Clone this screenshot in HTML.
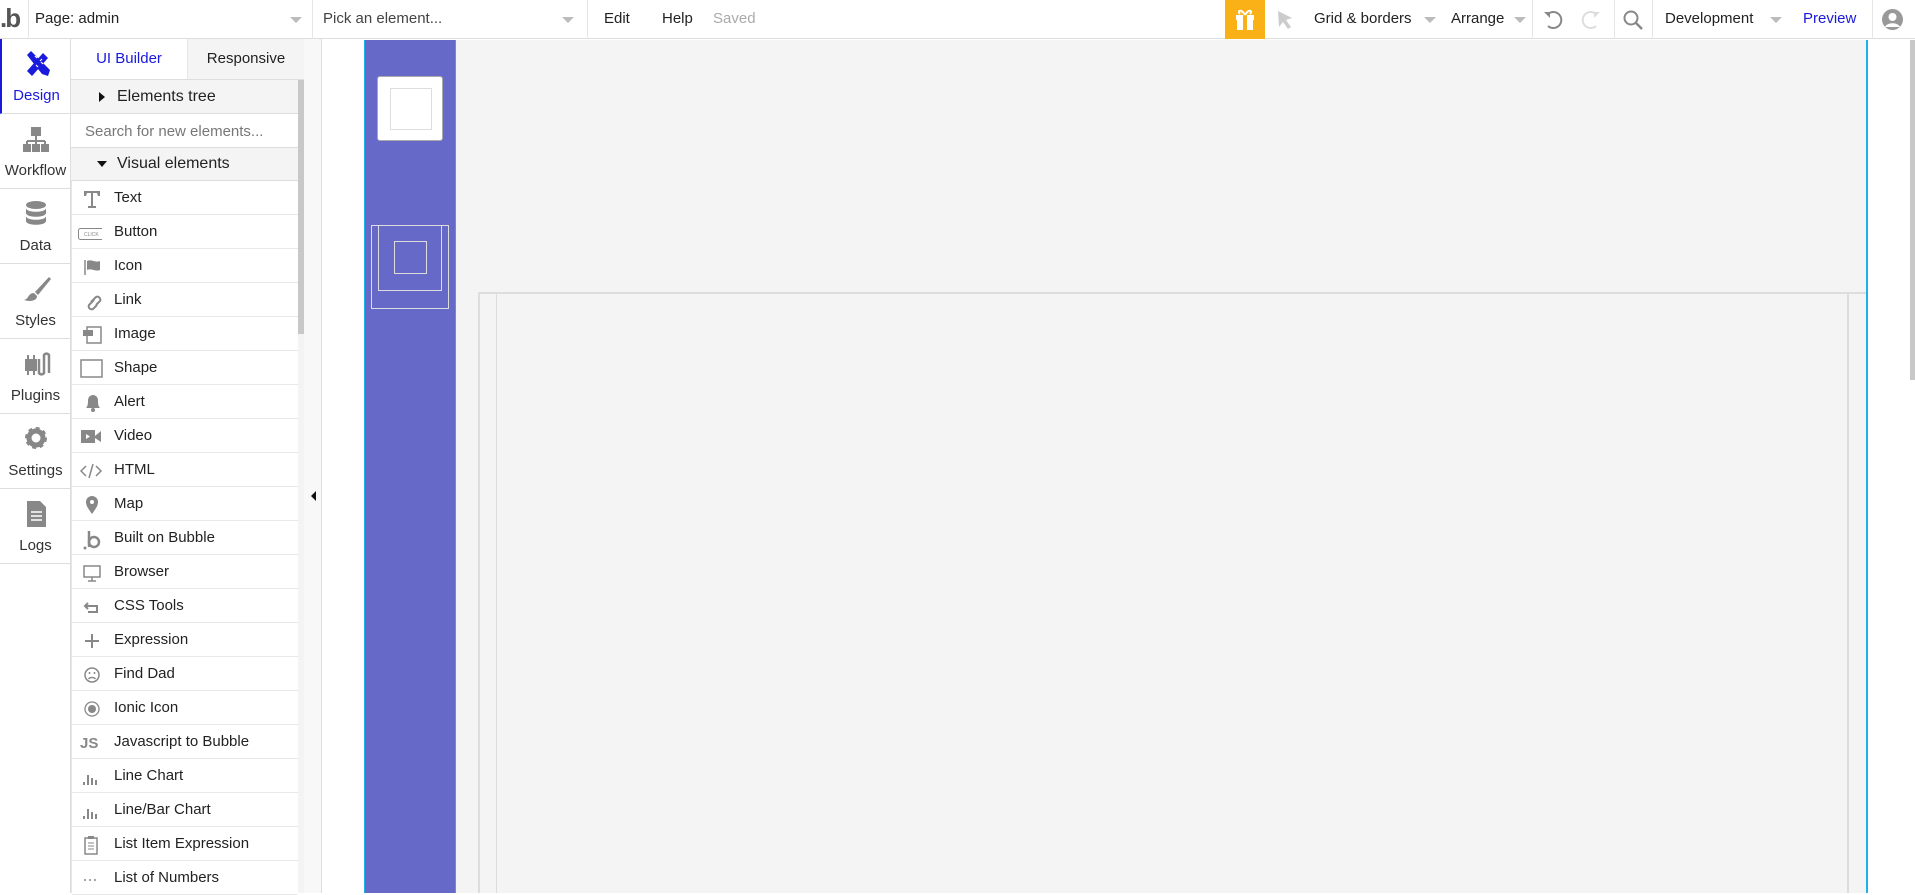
<!DOCTYPE html>
<html><head><meta charset="utf-8"><style>
*{box-sizing:border-box;margin:0;padding:0}
body{width:1915px;height:893px;overflow:hidden;background:#fff;font-family:"Liberation Sans",sans-serif;font-size:15px;color:#222;position:relative}
.a{position:absolute}
.top{left:0;top:0;width:1915px;height:39px;border-bottom:1px solid #ddd;background:#fff}
.t{position:absolute;top:10px;white-space:nowrap}
.dd{position:absolute;top:17px;width:0;height:0;border-left:6px solid transparent;border-right:6px solid transparent;border-top:6px solid #bbb}
.vd{position:absolute;top:0;width:1px;height:39px;background:#e6e6e6}
.side{left:0;top:39px;width:71px;height:854px;border-right:1px solid #ddd;background:#fff}
.si{position:absolute;left:0;width:71px;height:75px;border-bottom:1px solid #ddd;text-align:center;color:#333}
.si span{position:absolute;left:0;right:0;top:48px;font-size:15px}
.si svg{position:absolute;left:22px;top:10px}
.panel{left:71px;top:39px;width:233px;height:854px;background:#fff}
.row{position:absolute;left:1px;width:226px;height:34px;border-bottom:1px solid #e8e8e8}
.row span{position:absolute;left:42px;top:8px}
.row svg{position:absolute;left:10px;top:8px}
</style></head><body>
<div class="a top">
 <div class="t" style="left:0;top:3px;font-size:26px;color:#555;font-weight:bold;letter-spacing:-2px">.b</div>
 <div class="vd" style="left:28px"></div>
 <div class="t" style="left:35px">Page: admin</div><div class="dd" style="left:290px"></div>
 <div class="vd" style="left:312px"></div>
 <div class="t" style="left:323px;color:#444">Pick an element...</div><div class="dd" style="left:562px"></div>
 <div class="vd" style="left:587px"></div>
 <div class="t" style="left:604px">Edit</div>
 <div class="t" style="left:662px">Help</div>
 <div class="t" style="left:713px;color:#aaa">Saved</div>
 <div class="a" style="left:1225px;top:0;width:40px;height:39px;background:#f9b117"></div>
 <svg class="a" style="left:1233px;top:6px" width="24" height="26" viewBox="0 0 24 26"><path d="M3 9h18v5H3zM4 14h16v10H4z" fill="#fff"/><rect x="10" y="9" width="4" height="15" fill="#f9b117"/><path d="M12 9C8 2 4 5 7 8M12 9c4-7 8-4 5-1" stroke="#fff" stroke-width="2" fill="none"/></svg>
 <svg class="a" style="left:1276px;top:10px" width="18" height="20"><path d="M2 1l14 7-6 2 5 7-3 2-5-7-4 5z" fill="#ccc"/></svg>
 <div class="t" style="left:1314px">Grid &amp; borders</div><div class="dd" style="left:1424px"></div>
 <div class="t" style="left:1451px">Arrange</div><div class="dd" style="left:1514px"></div>
 <div class="vd" style="left:1532px"></div>
 <svg class="a" style="left:1542px;top:9px" width="22" height="22"><path d="M6 5a8 8 0 1 1 0 12" stroke="#888" stroke-width="2" fill="none"/><path d="M2 3l6 0 0 6z" fill="#888"/></svg>
 <svg class="a" style="left:1580px;top:9px" width="22" height="22"><path d="M16 5a8 8 0 1 0 0 12" stroke="#ddd" stroke-width="2" fill="none"/><path d="M20 3l-6 0 0 6z" fill="#ddd"/></svg>
 <div class="vd" style="left:1614px"></div>
 <svg class="a" style="left:1622px;top:9px" width="22" height="22"><circle cx="9" cy="9" r="6.5" stroke="#888" stroke-width="2" fill="none"/><path d="M14 14l6 6" stroke="#888" stroke-width="2.5"/></svg>
 <div class="vd" style="left:1652px"></div>
 <div class="t" style="left:1665px">Development</div><div class="dd" style="left:1770px"></div>
 <div class="t" style="left:1803px;color:#1a1adc">Preview</div>
 <div class="vd" style="left:1872px"></div>
 <svg class="a" style="left:1881px;top:8px" width="23" height="23"><circle cx="11.5" cy="11.5" r="10.5" fill="#999"/><circle cx="11.5" cy="9" r="4" fill="#fff"/><path d="M4 19c2-5 13-5 15 0" fill="#fff"/></svg>
</div>

<div class="a side">
 <div class="si" style="top:0;border-left:2px solid #1a1adc"><svg width="28" height="30" viewBox="0 0 28 30"><path d="M3 6l4-4 19 19-2 6-6-2z" fill="#1a1adc"/><path d="M3 22L19 4l5 5L8 27z" fill="#1a1adc"/><path d="M11 7l2 2M17 13l2 2M14 18l-2-2M18 10l-2 2" stroke="#fff" stroke-width="1.2"/></svg><span style="color:#1a1adc">Design</span></div>
 <div class="si" style="top:75px"><svg width="28" height="30"><rect x="9" y="3" width="10" height="9" fill="#888"/><path d="M14 12v5M5 17h18M5 17v4M14 17v4M23 17v4" stroke="#888" stroke-width="2"/><rect x="1" y="20" width="8" height="8" fill="#888"/><rect x="10" y="20" width="8" height="8" fill="#888"/><rect x="19" y="20" width="8" height="8" fill="#888"/></svg><span>Workflow</span></div>
 <div class="si" style="top:150px"><svg width="28" height="30"><ellipse cx="14" cy="6" rx="10" ry="4" fill="#888"/><path d="M4 9c0 5 20 5 20 0v5c0 5-20 5-20 0zM4 17c0 5 20 5 20 0v5c0 5-20 5-20 0z" fill="#888"/></svg><span>Data</span></div>
 <div class="si" style="top:225px"><svg width="30" height="30"><path d="M27 3L13 18l3 3L29 5z" fill="#888"/><path d="M12 19c-6 0-5 6-10 7 6 2 13 1 13-4z" fill="#888"/></svg><span>Styles</span></div>
 <div class="si" style="top:300px"><svg width="30" height="30"><path d="M3 10h12v12H3z" fill="#888"/><path d="M6 6v5M12 6v5M6 22v4M12 22v4" stroke="#888" stroke-width="2"/><path d="M17 10v14a3 3 0 0 0 5 0V6a3 3 0 0 1 5 0v18" stroke="#888" stroke-width="2.5" fill="none"/></svg><span>Plugins</span></div>
 <div class="si" style="top:375px"><svg width="30" height="30"><circle cx="14" cy="14" r="8" stroke="#888" stroke-width="6" fill="none" stroke-dasharray="3.2 3"/><circle cx="14" cy="14" r="7" stroke="#888" stroke-width="5" fill="none"/></svg><span>Settings</span></div>
 <div class="si" style="top:450px"><svg width="30" height="30"><path d="M5 2h13l6 6v20H5z" fill="#888"/><path d="M9 13h11M9 17h11M9 21h11" stroke="#fff" stroke-width="1.5"/></svg><span>Logs</span></div>
</div>

<div class="a panel">
 <div class="a" style="left:0;top:0;width:117px;height:41px;border-bottom:1px solid #ddd;border-right:1px solid #e6e6e6;text-align:center;padding-top:11px;color:#1a1adc">UI Builder</div>
 <div class="a" style="left:117px;top:0;width:116px;height:41px;background:#f4f4f4;border-bottom:1px solid #ddd;text-align:center;padding-top:11px">Responsive</div>
 <div class="a" style="left:0;top:41px;width:227px;height:34px;background:#f4f4f4;border-bottom:1px solid #ddd"><div class="a" style="left:28px;top:12px;border-top:5px solid transparent;border-bottom:5px solid transparent;border-left:6px solid #111"></div><div class="a" style="left:46px;top:8px;font-size:16px">Elements tree</div></div>
 <div class="a" style="left:0;top:75px;width:227px;height:34px;border-bottom:1px solid #ddd;padding:9px 0 0 14px;color:#777">Search for new elements...</div>
 <div class="a" style="left:0;top:109px;width:227px;height:33px;background:#f4f4f4;border-bottom:1px solid #ddd"><div class="a" style="left:26px;top:13px;border-left:5px solid transparent;border-right:5px solid transparent;border-top:6px solid #111"></div><div class="a" style="left:46px;top:7px;font-size:16px">Visual elements</div></div>
 <div class="a" style="left:227px;top:41px;width:6px;height:254px;background:#c8c8c8"></div>
 <div class="a" style="left:227px;top:295px;width:6px;height:559px;background:#f4f4f4"></div>
 <div class="a" style="left:0;top:142px;width:1px;height:712px;background:#e6e6e6"></div>

 <div class="row" style="top:142px"><svg width="22" height="20"><path d="M2 2h16v5h-2l-1-3h-4v13h3v2H6v-2h3V4H5L4 7H2z" fill="#888"/></svg><span>Text</span></div>
 <div class="row" style="top:176px"><svg width="24" height="20" style="left:6px"><rect x="0.5" y="5.5" width="31" height="11" rx="2" stroke="#888" fill="none"/><text x="6" y="13" font-size="5" fill="#888" font-family="Liberation Sans">CLICK</text></svg><span>Button</span></div>
 <div class="row" style="top:210px"><svg width="22" height="20"><path d="M3 3v15" stroke="#888" stroke-width="1.5"/><path d="M5 4c5-2 8 2 13 0v9c-5 2-8-2-13 0z" fill="#888"/></svg><span>Icon</span></div>
 <div class="row" style="top:244px"><svg width="22" height="20"><path d="M9 11l5-5a3 3 0 0 1 4 4l-4 4M12 9l-5 5a3 3 0 0 0 4 4l4-4" stroke="#888" stroke-width="2" fill="none"/></svg><span>Link</span></div>
 <div class="row" style="top:278px"><svg width="22" height="20"><rect x="5" y="2" width="14" height="16" stroke="#888" stroke-width="1.5" fill="none"/><rect x="1" y="5" width="10" height="6" fill="#888"/></svg><span>Image</span></div>
 <div class="row" style="top:312px"><svg width="24" height="20" style="left:8px"><rect x="1" y="1" width="21" height="17" stroke="#888" stroke-width="1.5" fill="none"/></svg><span>Shape</span></div>
 <div class="row" style="top:346px"><svg width="22" height="20"><path d="M4 15c2-2 2-5 2-8a5 5 0 0 1 10 0c0 3 0 6 2 8z" fill="#888"/><circle cx="11" cy="17" r="2" fill="#888"/></svg><span>Alert</span></div>
 <div class="row" style="top:380px"><svg width="24" height="20" style="left:9px"><rect x="0" y="3" width="14" height="13" fill="#888"/><path d="M14 9l6-5v11l-6-4z" fill="#888"/><path d="M5 7l4 2.5-4 2.5z" fill="#fff"/></svg><span>Video</span></div>
 <div class="row" style="top:414px"><svg width="24" height="20" style="left:8px"><path d="M6 5L1 10l5 5M16 5l5 5-5 5M13 3L9 17" stroke="#888" stroke-width="1.5" fill="none"/></svg><span>HTML</span></div>
 <div class="row" style="top:448px"><svg width="22" height="20"><path d="M10 19C5 12 4 10 4 7a6 6 0 0 1 12 0c0 3-1 5-6 12z" fill="#888"/><circle cx="10" cy="7" r="2" fill="#fff"/></svg><span>Map</span></div>
 <div class="row" style="top:482px"><svg width="22" height="22"><circle cx="3" cy="19" r="1.5" fill="#888"/><path d="M7 2v16" stroke="#888" stroke-width="2.5"/><circle cx="12" cy="13" r="5" stroke="#888" stroke-width="2.5" fill="none"/></svg><span>Built on Bubble</span></div>
 <div class="row" style="top:516px"><svg width="22" height="20"><rect x="2" y="3" width="16" height="11" stroke="#888" stroke-width="1.5" fill="none"/><path d="M10 14v4M6 18h8" stroke="#888" stroke-width="1.5"/></svg><span>Browser</span></div>
 <div class="row" style="top:550px"><svg width="22" height="20"><path d="M6 6L3 9l3 3M3 9h12v6H6" stroke="#888" stroke-width="2" fill="none"/></svg><span>CSS Tools</span></div>
 <div class="row" style="top:584px"><svg width="22" height="20"><path d="M10 3v14M3 10h14" stroke="#888" stroke-width="2"/></svg><span>Expression</span></div>
 <div class="row" style="top:618px"><svg width="22" height="20"><circle cx="10" cy="10" r="7" stroke="#888" stroke-width="1.5" fill="none"/><circle cx="7.5" cy="8" r="1" fill="#888"/><circle cx="12.5" cy="8" r="1" fill="#888"/><path d="M6.5 14a4 3 0 0 1 7 0" stroke="#888" stroke-width="1.3" fill="none"/></svg><span>Find Dad</span></div>
 <div class="row" style="top:652px"><svg width="22" height="20"><circle cx="10" cy="10" r="7" stroke="#888" stroke-width="1.3" fill="none"/><circle cx="10" cy="10" r="4" fill="#888"/></svg><span>Ionic Icon</span></div>
 <div class="row" style="top:686px"><svg width="24" height="20" style="left:8px"><text x="0" y="15" font-size="15" font-weight="bold" fill="#888" font-family="Liberation Sans">JS</text></svg><span>Javascript to Bubble</span></div>
 <div class="row" style="top:720px"><svg width="22" height="20"><path d="M2 18v-3M6 18V8M10 18v-7M14 18v-5" stroke="#888" stroke-width="2"/></svg><span>Line Chart</span></div>
 <div class="row" style="top:754px"><svg width="22" height="20"><path d="M2 18v-3M6 18V8M10 18v-7M14 18v-5" stroke="#888" stroke-width="2"/></svg><span>Line/Bar Chart</span></div>
 <div class="row" style="top:788px"><svg width="22" height="20"><rect x="3" y="3" width="12" height="16" stroke="#888" stroke-width="1.5" fill="none"/><rect x="6" y="1" width="6" height="3" fill="#888"/><path d="M6 8h6M6 11h6M6 14h6" stroke="#888"/></svg><span>List Item Expression</span></div>
 <div class="row" style="top:822px"><svg width="22" height="20"><circle cx="3" cy="11" r="1" fill="#888"/><circle cx="8" cy="11" r="1" fill="#888"/><circle cx="13" cy="11" r="1" fill="#888"/></svg><span>List of Numbers</span></div>
</div>

<div class="a" style="left:304px;top:39px;width:18px;height:854px;background:#f8f8f8;border-right:1px solid #ddd"></div>
<div class="a" style="left:311px;top:491px;border-top:5px solid transparent;border-bottom:5px solid transparent;border-right:5px solid #111"></div>

<div class="a" style="left:455px;top:40px;width:1411px;height:853px;background:#f4f4f4"></div>
<div class="a" style="left:364px;top:40px;width:92px;height:853px;background:#6769c9;border-left:1px solid #1fb0e6;border-right:1px solid #1fb0e6"></div>
<div class="a" style="left:377px;top:76px;width:66px;height:65px;background:#fff;border:1px solid #aaa;border-radius:3px"></div>
<div class="a" style="left:390px;top:88px;width:42px;height:42px;border:1px solid #ddd"></div>
<div class="a" style="left:371px;top:225px;width:78px;height:84px;border:1.5px solid #ddd"></div>
<div class="a" style="left:378px;top:225px;width:64px;height:66px;border:1.5px solid #ddd"></div>
<div class="a" style="left:394px;top:241px;width:33px;height:33px;border:1.5px solid #ddd"></div>

<div class="a" style="left:478px;top:292px;width:1388px;height:2px;background:#ddd"></div>
<div class="a" style="left:478px;top:292px;width:2px;height:601px;background:#ddd"></div>
<div class="a" style="left:496px;top:292px;width:1px;height:601px;background:#ddd"></div>
<div class="a" style="left:1847px;top:292px;width:2px;height:601px;background:#ddd"></div>
<div class="a" style="left:1866px;top:40px;width:2px;height:853px;background:#1fb0e6"></div>
<div class="a" style="left:1910px;top:40px;width:5px;height:340px;background:#c8c8c8"></div>
</body></html>
